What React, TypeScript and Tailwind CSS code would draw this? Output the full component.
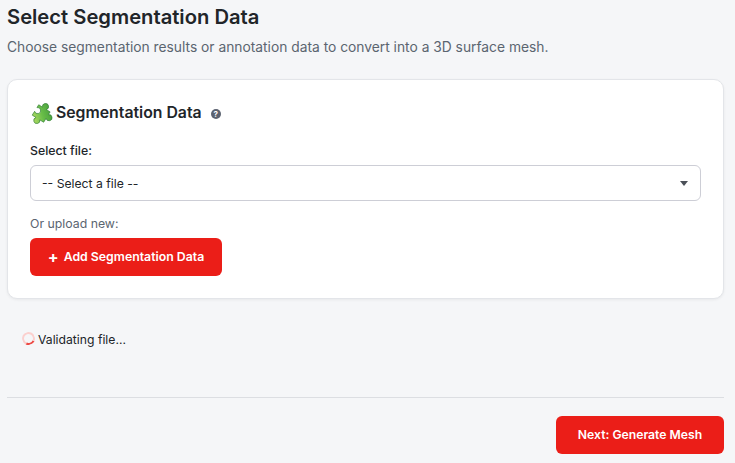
function PuzzleIcon() {
  return (
    <svg width="23" height="22" viewBox="3 3 18 18" className="shrink-0 overflow-visible">
      <defs>
        <linearGradient id="puzzle" x1="0.9" y1="0" x2="0.15" y2="1" gradientUnits="objectBoundingBox">
          <stop offset="0" stopColor="#3c9438" />
          <stop offset="0.55" stopColor="#68bd48" />
          <stop offset="1" stopColor="#b9de66" />
        </linearGradient>
      </defs>
      <path
        transform="rotate(32 12 12)"
        d="M6.5 7.5 H10.2 A2.5 2.5 0 1 1 13.8 7.5 H17.5 V10.2 A2.5 2.5 0 1 1 17.5 13.8 V17.5 H13.8 A2.5 2.5 0 1 1 10.2 17.5 H6.5 V13.8 A2.5 2.5 0 1 0 6.5 10.2 Z"
        fill="url(#puzzle)"
        stroke="#2f7d33"
        strokeWidth="0.5"
      />
    </svg>
  );
}

function HelpIcon() {
  return (
    <span className="ml-[9px] mt-[2px] flex h-[10px] w-[10px] items-center justify-center rounded-full bg-[#5b6270] text-[8px] font-bold leading-none text-white">
      ?
    </span>
  );
}

export default function App() {
  return (
    <div className="h-[463px] overflow-hidden bg-[#f5f6f8] pl-[7px] pr-[11px] pt-[5px] font-['Inter',sans-serif] text-[#212529]">
      <h1 className="text-[20.2px] font-semibold leading-6">Select Segmentation Data</h1>
      <p className="mt-[8px] text-[13.8px] leading-[21px] text-[#5b6570]">
        Choose segmentation results or annotation data to convert into a 3D surface mesh.
      </p>

      <div className="mt-[21px] h-[220px] rounded-[10px] border border-[#e3e5e9] bg-white pl-[22px] pr-[22px] pt-[21px] shadow-[0_1px_3px_rgba(0,0,0,0.06)]">
        <div className="flex items-center">
          <PuzzleIcon />
          <h2 className="ml-[3px] text-[15.8px] font-semibold leading-6">Segmentation Data</h2>
          <HelpIcon />
        </div>

        <label className="mt-[17px] block text-[12.3px] font-medium leading-[18px]">Select file:</label>
        <div className="mt-[5px] flex h-9 items-center justify-between rounded-[6px] border border-[#cdced6] bg-white pl-[11px] pr-[12px] text-[12.2px]">
          <span className="translate-y-px">-- Select a file --</span>
          <span className="h-0 w-0 border-x-4 border-t-[5px] border-x-transparent border-t-[#4b5058]" />
        </div>

        <p className="mt-[14px] text-[12.3px] leading-[18px] text-[#5b6570]">Or upload new:</p>
        <button className="mt-[5px] flex h-[38px] w-[192px] items-center justify-center rounded-[6px] bg-[#eb1e18] text-[12.3px] font-semibold text-white">
          <span className="mr-[5px] text-[16px] font-bold leading-none">+</span>
          Add Segmentation Data
        </button>
      </div>

      <div className="mt-[31px] flex h-[20px] items-center pl-[15px] text-[12.2px]">
        <span className="mb-[4px] mr-[3px] h-[13px] w-[13px] -rotate-[20deg] rounded-full border-2 border-[#fbd0ce] border-b-[#ec4a45]" />
        Validating file...
      </div>

      <div className="mt-[47px] border-t border-[#dcdee2]" />

      <div className="mt-[18px] flex justify-end">
        <button className="h-[38px] w-[168px] rounded-[6px] bg-[#eb1e18] text-[12.2px] font-semibold text-white">
          Next: Generate Mesh
        </button>
      </div>
    </div>
  );
}
